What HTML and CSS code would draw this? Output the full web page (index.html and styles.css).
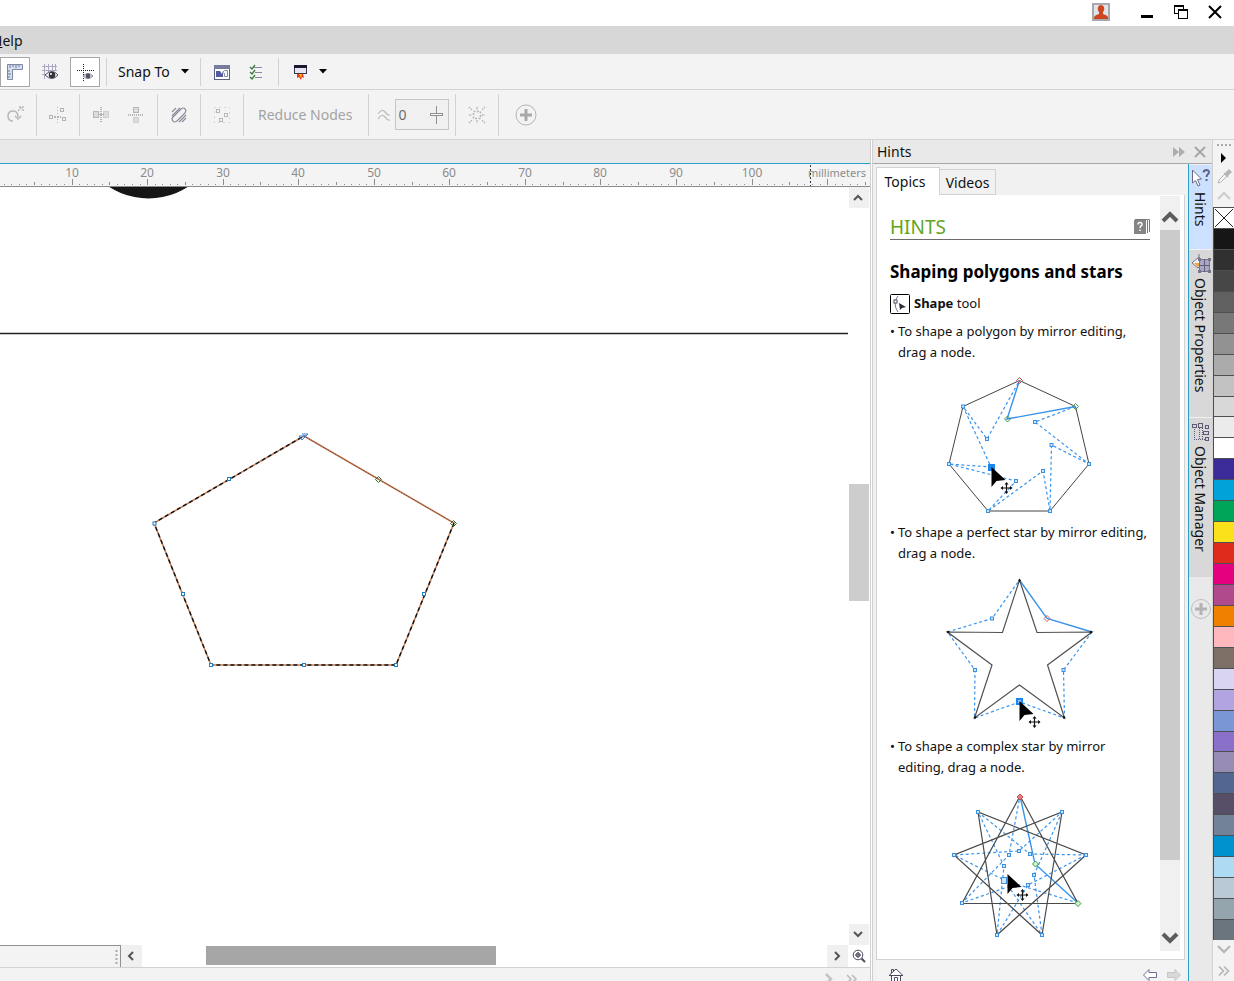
FILE: index.html
```
<!DOCTYPE html>
<html lang="en">
<head>
<meta charset="UTF-8" />
<meta name="viewport" content="width=device-width, initial-scale=1" />
<title>Drawing</title>
<link rel="stylesheet" href="styles.css">
</head>
<body>
<!-- shared shapes -->
<svg class="defs" aria-hidden="true">
  <defs>
    <path id="up" d="M1 9 L7 3 L13 9" fill="none" stroke-width="2.4" />
    <path id="down" d="M1 3 L7 9 L13 3" fill="none" stroke-width="2.4" />
    <g id="arrow-cursor">
      <path d="M0 0 V20 L5 14 L14 13 Z" fill="#000" />
      <path d="M10 21 H20 M15 16 V26" stroke="#111" stroke-width="1.2" />
      <path d="M9 21 l2.5 -2 v4 Z M21 21 l-2.5 -2 v4 Z M15 15 l-2 2.5 h4 Z M15 27 l-2 -2.5 h4 Z" fill="#111" />
    </g>
    <rect id="node" x="-1.5" y="-1.5" width="3" height="3" />
    <path id="diamond" d="M0 -3 L3 0 L0 3 L-3 0 Z" />
  </defs>
</svg>

<div class="app">
  <header class="titlebar">
    <button class="win-btn user" aria-label="Account">
      <svg width="18" height="18"><rect x="1" y="1" width="16" height="16" fill="#dfe5ea" stroke="#a9a9ad" stroke-width="2" /><path d="M2 16 V14 Q3 12 7 11 V9 Q5 7 6 4 Q7 2 9 2 Q11 2 12 4 Q13 7 11 9 V11 Q15 12 16 14 V16 Z" fill="#cf4520" /></svg>
    </button>
    <button class="win-btn" aria-label="Minimize">
      <svg width="14" height="14"><rect x="1" y="10" width="12" height="3" fill="#000" /></svg>
    </button>
    <button class="win-btn" aria-label="Restore">
      <svg width="14" height="14" fill="#fff" stroke="#000"><rect x="0.5" y="0.5" width="9" height="8" /><path d="M0 1 H10" stroke-width="2" /><rect x="4.5" y="4.5" width="9" height="9" /><path d="M4 5 H14" stroke-width="2" /></svg>
    </button>
    <button class="win-btn" aria-label="Close">
      <svg width="14" height="14"><path d="M1 1 L13 13 M13 1 L1 13" stroke="#000" stroke-width="2" /></svg>
    </button>
  </header>

  <nav class="menubar"><button><u>H</u>elp</button></nav>

  <div class="toolbar standard" role="toolbar" aria-label="Standard">
    <button class="tool pressed" aria-label="Show rulers">
      <svg width="18" height="18"><path d="M1.5 1.5 H16.5 V6.5 H6.5 V16.5 H1.5 Z" fill="#d3e0ef" stroke="#7e87a5" /><path d="M4 2 V5 M7 2 V4 M10 2 V5 M13 2 V4 M2 8 H4 M2 11 H5 M2 14 H4" stroke="#6d7590" /></svg>
    </button>
    <button class="tool" aria-label="Show grid">
      <svg width="18" height="18"><path d="M1 3.5 H16 M1 7.5 H16 M1 11.5 H8 M3.5 1 V16 M7.5 1 V10 M11.5 1 V8 M14.5 1 V8" stroke="#aaa8c4" /><path d="M4 12 Q11 5 17 12 Q11 19 4 12 Z" fill="#fff" stroke="#4d4b5b" /><circle cx="11" cy="12" r="3.3" fill="#34323d" /><circle cx="10" cy="11" r="1" fill="#fff" /></svg>
    </button>
    <button class="tool pressed" aria-label="Show guidelines">
      <svg width="18" height="18"><path d="M1 7.5 H18 M7.5 1 V18" stroke="#222" stroke-dasharray="1 1" /><path d="M7 13 Q12 8 17 13 Q12 18 7 13 Z" fill="#e4e4e8" stroke="#8d8a99" /><circle cx="12" cy="13" r="2.4" fill="#55525f" /></svg>
    </button>
    <span class="sep"></span>
    <button class="snap">Snap To <svg width="8" height="5"><path d="M0 0 H8 L4 4.5 Z" /></svg></button>
    <span class="sep"></span>
    <button class="tool" aria-label="Welcome screen">
      <svg width="16" height="16"><rect x="0.5" y="1.5" width="15" height="14" fill="#fff" stroke="#5c6180" /><rect x="0" y="1" width="16" height="4" fill="#777b9c" /><path d="M2 7 H6 L8 10 L9 7 V13 H2 Z" fill="#55599e" /><path d="M8.5 8.5 L10.5 6.5 H13.5 V12.5 H10.5 V9.5 Z" fill="#f4f4ff" stroke="#888cab" /></svg>
    </button>
    <button class="tool" aria-label="Options">
      <svg width="16" height="16"><path d="M5 3.5 H13 M6 8.5 H13 M6 13.5 H13" stroke="#8b87a8" /><path d="M1 3 L3 5 L6 1 M1 8 L3 10 L6 6 M1 13 L3 15 L6 11" stroke="#3b7a3b" stroke-width="1.3" fill="none" /></svg>
    </button>
    <span class="sep"></span>
    <button class="tool" aria-label="Application launcher">
      <svg width="16" height="18"><rect x="2.5" y="2.5" width="12" height="8" fill="#e6e4f2" stroke="#3a3853" /><rect x="2" y="2" width="13" height="3" fill="#1b1930" /><path d="M5 11 H11 L12 15 L10 14 L9 17 L7 14 L5 15 Z" fill="#e8381c" /><path d="M7 11 H10 L9 15 Z" fill="#ffbe1e" /></svg>
    </button>
    <button class="more" aria-label="Launcher list"><svg width="8" height="5"><path d="M0 0 H8 L4 4.5 Z" /></svg></button>
  </div>

  <div class="toolbar property" role="toolbar" aria-label="Property bar">
    <button class="tool" aria-label="Rotate nodes">
      <svg width="18" height="18" fill="none" stroke="#b8b8b8" stroke-width="1.5"><path d="M7 15 Q2 15 2 10 Q2 5 7 5 Q12 5 12 11 M9 10 L12 13 L15 10" /><path d="M12 5 L16 1 M13 1 H17 V5" stroke-dasharray="2 1" /></svg>
    </button>
    <span class="sep"></span>
    <button class="tool" aria-label="Align nodes">
      <svg width="18" height="18" fill="none" stroke="#b5b5b5"><path d="M8.5 1 V17" stroke-dasharray="1 2" /><rect x="0.5" y="9.5" width="3" height="3" /><rect x="11.5" y="2.5" width="3" height="3" /><rect x="13.5" y="11.5" width="3" height="3" /><path d="M5 11 H12" stroke-width="2" stroke-dasharray="2 1" /></svg>
    </button>
    <span class="sep"></span>
    <button class="tool" aria-label="Reflect horizontally">
      <svg width="18" height="18" fill="#dcdcdc" stroke="#b5b5b5"><rect x="1.5" y="5.5" width="5" height="6" /><rect x="11.5" y="5.5" width="5" height="6" stroke-dasharray="1 1" /><path d="M9 1 V17" stroke-width="2" stroke-dasharray="1 1" /><path d="M6 8.5 H12" /></svg>
    </button>
    <button class="tool" aria-label="Reflect vertically">
      <svg width="18" height="18" fill="#dcdcdc" stroke="#b5b5b5"><rect x="6.5" y="1.5" width="5" height="5" /><rect x="6.5" y="11.5" width="5" height="5" stroke-dasharray="1 1" /><path d="M1 9 H17" stroke-width="2" stroke-dasharray="1 1" /></svg>
    </button>
    <span class="sep"></span>
    <button class="tool" aria-label="Elastic mode">
      <svg width="18" height="18" fill="none" stroke="#8d8b9a" stroke-width="1.2"><path d="M2 6 L6 2 M2 10 L10 2 M9 16 L16 9 M12 16 L16 12" /><path d="M3 11 L11 3 Q14 1 15 3 Q17 5 14 8 L7 15 Q4 17 3 15 Q1 13 3 11 Z" /></svg>
    </button>
    <span class="sep"></span>
    <button class="tool" aria-label="Select all nodes">
      <svg width="18" height="18" fill="none" stroke="#b8b8b8"><rect x="1.5" y="1.5" width="15" height="15" stroke-dasharray="1 4" /><rect x="3.5" y="3.5" width="3" height="3" /><rect x="11.5" y="7.5" width="3" height="3" /><rect x="6.5" y="12.5" width="3" height="3" /></svg>
    </button>
    <span class="sep"></span>
    <button class="reduce" disabled>Reduce Nodes</button>
    <span class="sep"></span>
    <div class="smooth">
      <label for="smooth" aria-label="Curve smoothness">
        <svg width="18" height="16" fill="none" stroke="#bdbdbd" stroke-width="1.3"><path d="M3 7 Q7 1 10 5 T15 8 M3 12 Q7 6 10 10 T15 13" /></svg>
      </label>
      <div class="spin">
        <input id="smooth" type="text" value="0">
        <svg width="14" height="20" fill="#f6f6f6" stroke="#909090"><path d="M6.5 1 V19" /><rect x="0.5" y="8.5" width="12" height="2" /></svg>
      </div>
    </div>
    <span class="sep"></span>
    <button class="tool" aria-label="Bounding box">
      <svg width="18" height="18" fill="none" stroke="#b5b5b5"><rect x="5.5" y="5.5" width="7" height="7" stroke-width="1.5" stroke-dasharray="2 1.5" /><path d="M1 1 L4 4 M17 1 L14 4 M1 17 L4 14 M17 17 L14 14 M9 1 V4 M9 14 V17 M1 9 H4 M14 9 H17" stroke-width="1.5" stroke-dasharray="1.5 1" /></svg>
    </button>
    <span class="sep"></span>
    <button class="add" aria-label="Customize">
      <svg width="22" height="22"><circle cx="11" cy="11" r="10" fill="none" stroke="#b5b5b5" /><path d="M11 5 V17 M5 11 H17" stroke="#a9a9a9" stroke-width="3" /></svg>
    </button>
  </div>

  <main class="workspace">
    <section class="document">
      <div class="doc-tabs"></div>
      <svg class="ruler" id="ruler"></svg>
      <div class="view">
        <svg class="canvas" role="img" aria-label="Pentagon with edit nodes">
          <circle cx="148.5" cy="-61" r="72.5" fill="#161616" />
          <path d="M0 146.5 H848" stroke="#222" stroke-width="1.5" />
          <g fill="none">
            <path d="M304 249 L454 336 L396 478 H211 L154 336 Z" stroke="#c4805c" stroke-width="1.6" />
            <path d="M454 336 L396 478 H211 L154 336 L304 249" stroke="#111" stroke-width="1.4" stroke-dasharray="4 3" />
            <path d="M304 249 L454 336" stroke="#7a3a24" stroke-dasharray="1 1" />
          </g>
          <g fill="#fff" stroke="#1d7fc4">
            <use href="#node" x="154.5" y="336.5" /><use href="#node" x="229" y="292" />
            <use href="#node" x="183" y="407" /><use href="#node" x="211" y="478" />
            <use href="#node" x="304" y="478" /><use href="#node" x="396" y="478" />
            <use href="#node" x="424" y="407" />
            <path d="M299 249 H306 L302 253 Z M302 247 H308 L304 251" fill="none" stroke="#2f7fd8" />
          </g>
          <g fill="none" stroke="#2e6b30">
            <use href="#diamond" x="378.5" y="292.5" /><use href="#diamond" x="453.5" y="336.5" />
          </g>
        </svg>
        <div class="vscroll">
          <button aria-label="Scroll up"><svg width="14" height="12" stroke="#555"><path d="M2 8 L6 4 L10 8" fill="none" stroke-width="2" /></svg></button>
          <div class="track"><div class="thumb"></div></div>
          <button aria-label="Scroll down"><svg width="14" height="12" stroke="#555"><path d="M2 3 L6 7 L10 3" fill="none" stroke-width="2" /></svg></button>
        </div>
      </div>
      <div class="hscroll">
        <div class="pages"><svg width="3" height="16"><path d="M1.5 1 V16" stroke="#aaa" stroke-width="2" stroke-dasharray="2 2" /></svg></div>
        <button aria-label="Scroll left"><svg width="12" height="12"><path d="M7 2 L3 6 L7 10" fill="none" stroke="#555" stroke-width="2" /></svg></button>
        <div class="track"><div class="thumb"></div></div>
        <button aria-label="Scroll right"><svg width="12" height="12"><path d="M3 2 L7 6 L3 10" fill="none" stroke="#555" stroke-width="2" /></svg></button>
        <button class="navigator" aria-label="Navigator"><svg width="14" height="14" fill="none" stroke="#4b4b5e"><circle cx="6" cy="6" r="4.8" /><circle cx="6" cy="6" r="2" /><path d="M6 3 V9 M3 6 H9" /><path d="M9.5 9.5 L13 13" stroke-width="2" /></svg></button>
      </div>
      <div class="docbar">
        <svg width="10" height="12"><path d="M2 1 L7 6 L2 11" fill="none" stroke="#c4c4c4" stroke-width="2.5" /></svg>
        <svg width="12" height="12"><path d="M1 2 L5 6 L1 10 M6 2 L10 6 L6 10" fill="none" stroke="#bcbcbc" stroke-width="1.6" /></svg>
      </div>
    </section>

    <aside class="docker">
      <div class="docker-head">
        <h2>Hints</h2>
        <button aria-label="Collapse docker"><svg width="14" height="12"><path d="M1 1 L7 6 L1 11 Z M7 1 L13 6 L7 11 Z" fill="#adadad" /></svg></button>
        <button aria-label="Close docker"><svg width="12" height="12"><path d="M1 1 L11 11 M11 1 L1 11" stroke="#a6a6a6" stroke-width="2" /></svg></button>
      </div>
      <div class="docker-body">
        <div class="panel">
          <div class="panel-tabs" role="tablist">
            <button role="tab" aria-selected="true" class="active">Topics</button>
            <button role="tab" aria-selected="false">Videos</button>
          </div>
          <div class="panel-main">
            <article class="hints">
              <div class="hints-title">
                <h3>HINTS</h3>
                <svg width="16" height="16"><rect x="0" y="1" width="12" height="14" fill="#858585" /><path d="M4 5.5 Q4 3.5 6 3.5 Q8.5 3.5 8 6 Q6 7 6 9 M6 10.5 V12" fill="none" stroke="#fff" stroke-width="1.4" /><path d="M1 0.5 H13.5 V14 M14 0.5 H15.5 V13" fill="none" stroke="#777" /></svg>
              </div>
              <h4>Shaping polygons and stars</h4>
              <p class="tool-name">
                <svg width="20" height="20" fill="none"><rect x="0.5" y="0.5" width="19" height="19" rx="1" stroke="#000" /><path d="M8 2 Q5 6 5 9 Q5 14 8 18" stroke="#77758a" /><rect x="4" y="6" width="3" height="3" fill="#fff" stroke="#4b4b5e" /><path d="M9 9 L10 16 L12 14 L16 13 Z" fill="#2e2c3a" /></svg>
                <span><b>Shape</b> tool</span>
              </p>
              <ul>
                <li>To shape a polygon by mirror editing, drag a node.
                  <svg class="figure" width="152" height="150" viewBox="944 372 152 150" fill="none">
                    <path d="M1019.5 380.5 L1075.5 406.5 L1089 464 L1050 511 H988 L949 464 L963 406.5 Z" stroke="#444" />
                    <g stroke="#3a94ec">
                      <path d="M1019.5 380.5 L1007 419 L1075.5 406.5" stroke-width="1.4" />
                      <path d="M1075.5 406.5 L1035 422 L1089 464 L1051.5 445 L1050 511 L1043 471 L988 511 L1016 481 L949 464 L991 467 L963 406.5 L987 439 L1019.5 380.5" stroke-dasharray="3 2.5" stroke-width="1.2" />
                    </g>
                    <g fill="#cfe6ff" stroke="#3a8fe0">
                      <use href="#node" x="963" y="406.5" /><use href="#node" x="949" y="464" /><use href="#node" x="988" y="511" /><use href="#node" x="1050" y="511" /><use href="#node" x="1089" y="464" />
                      <use href="#node" x="987" y="439" /><use href="#node" x="1035" y="422" /><use href="#node" x="1051.5" y="445" /><use href="#node" x="1043" y="471" /><use href="#node" x="1016" y="481" />
                    </g>
                    <use href="#diamond" x="1019.5" y="380.5" stroke="#d04848" />
                    <g stroke="#3c9a4c"><use href="#diamond" x="1007.5" y="419" /><use href="#diamond" x="1075.5" y="406.5" /></g>
                    <rect x="988" y="464" width="7" height="7" fill="#1c86ee" />
                    <use href="#arrow-cursor" x="991.5" y="467" />
                  </svg>
                </li>
                <li>To shape a perfect star by mirror editing, drag a node.
                  <svg class="figure" width="152" height="163" viewBox="944 573 152 163" fill="none">
                    <g stroke="#3a94ec">
                      <path d="M1019.5 580 L1047 618.5 L1092 632" stroke-width="1.4" />
                      <path d="M1092 632 L1063.5 670 L1064.5 718 L1019.5 702 L974.5 718 L975 670 L947.5 632 L992 618.5 L1019.5 580" stroke-dasharray="3 2.5" stroke-width="1.2" />
                    </g>
                    <path d="M1019.5 580 L1037 632.5 L1092 632 L1047.5 665 L1064.5 718 L1019.5 685 L974.5 718 L992 665 L947.5 632 L1002.5 632.5 Z" stroke="#505050" stroke-width="1.2" />
                    <g fill="#111"><circle cx="1019.5" cy="580.5" r="1.2" /><circle cx="1091" cy="632" r="1.2" /><circle cx="948" cy="632" r="1.2" /><circle cx="975" cy="717.5" r="1.2" /><circle cx="1064" cy="717.5" r="1.2" /></g>
                    <g fill="#cfe6ff" stroke="#3a8fe0"><use href="#node" x="992" y="618.5" /><use href="#node" x="975" y="670" /><use href="#node" x="1063.5" y="670" /></g>
                    <use href="#diamond" x="1047" y="618.5" stroke="#d06060" />
                    <rect x="1017" y="699" width="5" height="5" fill="#8cc4ff" stroke="#1c86ee" stroke-width="2" />
                    <use href="#arrow-cursor" x="1019.5" y="701" />
                  </svg>
                </li>
                <li>To shape a complex star by mirror editing, drag a node.
                  <svg class="figure" width="152" height="160" viewBox="944 787 152 160" fill="none">
                    <g stroke="#3a94ec">
                      <path d="M1020 796 L1035 864 L1078 903" stroke-width="1.4" />
                      <path d="M1062 812 L1034 875 L1042 935 L1004 880 L954 855 L1019 851 L1062 812 M1086 855 L1028 885 L997 935 L1004 866 L978 812 L1030 854 L1086 855 M1078 903 L1016 884 L962 903 L1009 855 L1020 796" stroke-dasharray="3 2.5" stroke-width="1.2" />
                    </g>
                    <path d="M1020 796 L1078 903.5 H962 Z M1062 812 L1042 935 L954 855 Z M1086 855 L997 935 L978 812 Z" stroke="#4a4a4a" stroke-width="1.2" />
                    <g fill="#cfe6ff" stroke="#3a8fe0">
                      <use href="#node" x="1062" y="812" /><use href="#node" x="1086" y="855" /><use href="#node" x="1042" y="935" /><use href="#node" x="997" y="935" /><use href="#node" x="962" y="903" /><use href="#node" x="954" y="855" /><use href="#node" x="978" y="812" />
                      <use href="#node" x="1034" y="875" /><use href="#node" x="1028" y="885" /><use href="#node" x="1004" y="866" /><use href="#node" x="1009" y="855" /><use href="#node" x="1019" y="851" /><use href="#node" x="1030" y="854" />
                      <rect x="1001.5" y="877.5" width="5" height="6" />
                    </g>
                    <use href="#diamond" x="1020" y="797" fill="#e08080" stroke="#d04848" />
                    <g fill="#d8f2d0" stroke="#3c9a4c"><use href="#diamond" x="1035.5" y="864" /><use href="#diamond" x="1078" y="903.5" /></g>
                    <use href="#arrow-cursor" x="1007.5" y="874" />
                  </svg>
                </li>
              </ul>
            </article>
            <div class="panel-scroll">
              <button aria-label="Scroll hints up"><svg width="18" height="14"><path d="M2 11 L9 4 L16 11" fill="none" stroke="#5c5c5c" stroke-width="4" /></svg></button>
              <div class="track"><div class="thumb"></div></div>
              <button aria-label="Scroll hints down"><svg width="18" height="14"><path d="M2 3 L9 10 L16 3" fill="none" stroke="#5c5c5c" stroke-width="4" /></svg></button>
            </div>
          </div>
          <div class="panel-foot">
            <button aria-label="Home"><svg width="16" height="16" fill="#fff" stroke="#4c4a63"><path d="M3.5 8 V15.5 H12.5 V8" /><path d="M1 8.5 L8 2 L15 8.5 Z M3.5 6 V2.5 H5.5 V4" /><path d="M6.5 15 V10.5 H9.5 V15" /></svg></button>
            <span class="grow"></span>
            <button aria-label="Back"><svg width="16" height="14"><path d="M1.5 7 L7 1.5 V4.5 H14.5 V9.5 H7 V12.5 Z" fill="#fff" stroke="#6f7096" /></svg></button>
            <button aria-label="Forward"><svg width="16" height="14"><path d="M14.5 7 L9 1.5 V4.5 H1.5 V9.5 H9 V12.5 Z" fill="#d9d9d9" stroke="#c6c6c6" /></svg></button>
          </div>
        </div>
        <div class="side-tabs">
          <button class="active">
            <svg width="20" height="20"><path d="M1.5 2 V15 L4.5 12.5 L7 18 L9 17 L6.5 11.5 L10.5 11 Z" fill="#fff" stroke="#6a6a86" /><path d="M12.5 4.5 Q13 2 15.5 2 Q19 2.5 17.5 5.5 Q15.5 7 15.5 9 M15.5 11 V13" fill="none" stroke="#5e6284" stroke-width="2" /></svg>
            Hints
          </button>
          <button>
            <svg width="20" height="20"><path d="M1 9 L8 3 L13 9 L7 14 Z" fill="#f1f1f6" stroke="#77758c" /><path d="M3 9 H11 L7 13 Z" fill="#e9a33a" /><path d="M8 3 V0" stroke="#77758c" /><rect x="8.5" y="5.5" width="10" height="12" fill="#a9a6c4" stroke="#77758c" /><path d="M13.5 5 V18 M8 11.5 H19" stroke="#5f5d7a" /><path d="M7 4 h3 v3 h-3 Z M17 4 h3 v3 h-3 Z M7 16 h3 v3 h-3 Z M17 16 h3 v3 h-3 Z" fill="#77758c" /></svg>
            Object Properties
          </button>
          <button class="manager">
            <svg width="20" height="20" fill="none" stroke="#5d5b76"><rect x="1.5" y="2.5" width="4" height="3" /><rect x="7.5" y="1.500" width="4" height="4" /><rect x="14.5" y="3.5" width="3" height="3" /><rect x="12.5" y="9.5" width="5" height="3" /><rect x="14.5" y="15.5" width="3" height="3" /><path d="M3.5 7 V18 M8.5 6 V18 M11.5 6 V18 M3 17.5 H14" stroke-dasharray="1 1" /></svg>
            Object Manager
          </button>
          <button class="add-tab" aria-label="Add docker"><svg width="20" height="20"><circle cx="10" cy="10" r="9.5" fill="none" stroke="#bdbdbd" /><path d="M10 4 V16 M4 10 H16" stroke="#b3b3b3" stroke-width="3" /></svg></button>
        </div>
      </div>
    </aside>

    <div class="palette">
      <div class="palette-top">
        <svg width="16" height="4"><path d="M1 2 H16" stroke="#aaa" stroke-width="2" stroke-dasharray="2 2" /></svg>
        <button aria-label="Palette menu"><svg width="8" height="12"><path d="M1 1 L6 6 L1 11 Z" fill="#000" /></svg></button>
        <button aria-label="Eyedropper"><svg width="16" height="16"><path d="M2 14 L3 11 L9 5 L11 7 L5 13 Z" fill="#f5f5f5" stroke="#b5b5b5" /><path d="M8 4 L12 8 M9 5 L13 1 L15 3 L11 7" fill="#b5b5b5" stroke="#b5b5b5" stroke-width="1.5" /></svg></button>
        <button aria-label="Palette up"><svg width="14" height="12" stroke="#cfcfcf"><use href="#up" /></svg></button>
      </div>
      <div class="swatches" id="swatches"></div>
      <div class="palette-end">
        <button aria-label="Palette down"><svg width="14" height="12" stroke="#b9b9b9"><use href="#down" /></svg></button>
        <button aria-label="Expand palette"><svg width="14" height="12"><path d="M2 1.5 L6.5 6 L2 10.5 M7 1.5 L11.5 6 L7 10.5" fill="none" stroke="#b5b5b5" stroke-width="1.6" /></svg></button>
      </div>
    </div>
  </main>
</div>

<script src="app.js"></script>
</body>
</html>
```
FILE: styles.css
```
:root {
  --bar: #f3f3f3;
  --strip: #e9e9e9;
  --line: #d2d2d2;
  --accent: #2b9fc9;
  --font: "Noto Sans", "Open Sans", sans-serif;
}

* {
  box-sizing: border-box;
}

body {
  margin: 0;
  font-family: var(--font);
  font-size: 14px;
  color: #111;
  background: #fff;
}

button {
  display: flex;
  align-items: center;
  justify-content: center;
  margin: 0;
  padding: 0;
  border: 0;
  background: none;
  color: inherit;
  font: inherit;
  white-space: nowrap;
}

svg {
  display: block;
  flex: none;
}

h2, h3, h4, p, ul {
  margin: 0;
  padding: 0;
  font-weight: normal;
}

.defs {
  position: absolute;
  width: 0;
  height: 0;
}

.app {
  display: flex;
  flex-direction: column;
  height: 100vh;
  overflow: hidden;
}

/* window bars */
.titlebar {
  display: flex;
  flex: none;
  justify-content: flex-end;
  align-items: center;
  gap: 20px;
  height: 26px;
  padding: 0 12px 2px 0;
}

.user {
  margin-right: 10px;
}

.menubar {
  display: flex;
  flex: none;
  align-items: center;
  height: 28px;
  margin-left: -8px;
  background: #d7d7d7;
}

.toolbar {
  display: flex;
  flex: none;
  align-items: center;
  gap: 5px;
  background: var(--bar);
  border-bottom: 1px solid var(--line);
}

.standard {
  height: 36px;
}

.property {
  height: 50px;
}

.tool {
  width: 30px;
  height: 30px;
}

.tool.pressed {
  background: #fff;
  border: 1px solid #a8a8a8;
}

.sep {
  width: 1px;
  height: 28px;
  margin: 0 1px;
  background: var(--line);
}

.property .sep {
  height: 42px;
}

.snap {
  gap: 11px;
  padding: 0 5px;
}

.more {
  padding: 0 4px;
  margin-left: -5px;
}

.reduce {
  padding: 0 10px 0 8px;
  color: #a3a3a3;
}

.smooth {
  display: flex;
  align-items: center;
  gap: 2px;
}

.spin {
  display: flex;
  align-items: center;
  width: 54px;
  height: 31px;
  padding: 0 4px 0 2px;
  border: 1px solid #c6c6c6;
  background: #f0f0f0;
}

.spin input {
  flex: 1;
  min-width: 0;
  padding: 0;
  border: 0;
  background: none;
  color: #6e6e6e;
  font: 14px var(--font);
}

.add {
  width: 42px;
}

/* workspace */
.workspace {
  display: flex;
  flex: 1;
  min-height: 0;
}

.document {
  display: flex;
  flex: 1;
  flex-direction: column;
  min-width: 0;
}

.doc-tabs {
  flex: none;
  height: 24px;
  background: var(--strip);
  border-bottom: 1px solid var(--accent);
}

.ruler {
  width: 100%;
  height: 23px;
  background: #f4f4f4;
  border-bottom: 1px solid #8a8a8a;
  font-size: 12px;
  fill: #8c8c8c;
}

.ruler .unit {
  font-size: 11px;
}

.view {
  display: flex;
  flex: 1;
  min-height: 0;
}

.canvas {
  flex: 1;
  min-width: 0;
  height: 100%;
}

.vscroll {
  display: flex;
  flex-direction: column;
  width: 22px;
  padding: 0 1px;
}

.vscroll button {
  height: 21px;
  background: #f0f0f0;
}

.track {
  flex: 1;
}

.vscroll .thumb {
  height: 117px;
  margin-top: 276px;
  background: #cdcdcd;
}

.hscroll {
  display: flex;
  flex: none;
  height: 22px;
}

.hscroll button {
  width: 21px;
  background: #f0f0f0;
}

.hscroll .navigator {
  width: 22px;
  background: #fff;
}

.pages {
  display: flex;
  align-items: center;
  justify-content: flex-end;
  width: 121px;
  padding-right: 2px;
  background: var(--bar);
  border: solid #8e9190;
  border-width: 1px 1px 0 0;
}

.hscroll .thumb {
  width: 290px;
  height: 19px;
  margin: 1px 0 0 64px;
  background: #a6a6a6;
}

.docbar {
  display: flex;
  flex: none;
  align-items: flex-end;
  justify-content: flex-end;
  gap: 12px;
  height: 14px;
  padding-right: 12px;
  overflow: hidden;
  background: var(--bar);
  border-top: 1px solid var(--line);
}

.docbar svg {
  margin-bottom: -4px;
}

/* docker */
.docker {
  display: flex;
  flex-direction: column;
  width: 342px;
  border-left: 3px double #d0d0d0;
}

.docker-head {
  display: flex;
  flex: none;
  align-items: center;
  gap: 8px;
  height: 24px;
  padding: 0 6px 0 4px;
  background: var(--strip);
  border-bottom: 1px solid #a8a8a8;
}

.docker-head h2 {
  flex: 1;
  font-size: 14px;
}

.docker-body {
  display: flex;
  flex: 1;
  min-height: 0;
}

.panel {
  display: flex;
  flex: 1;
  flex-direction: column;
  padding: 3px 3px 0;
  background: #f1f1f1;
}

.panel-tabs {
  display: flex;
  flex: none;
  align-items: flex-end;
  height: 28px;
}

.panel-tabs button {
  width: 56px;
  height: 26px;
  border: 1px solid var(--line);
  border-left: 0;
}

.panel-tabs .active {
  width: 64px;
  height: 28px;
  padding-right: 6px;
  border: 1px solid var(--line);
  border-bottom: 0;
  background: #fff;
}

.panel-main {
  display: flex;
  flex: 1;
  min-height: 0;
  padding: 1px 4px 8px 0;
  border: solid var(--line);
  border-width: 0 1px 0 1px;
  background: #fff;
}

.hints {
  flex: 1;
  min-width: 0;
  overflow: hidden;
  padding: 19px 10px 0 13px;
  font-size: 13px;
  line-height: 21px;
}

.hints-title {
  display: flex;
  align-items: center;
  justify-content: space-between;
  height: 25px;
  border-bottom: 1px solid #6b6b6b;
}

.hints-title h3 {
  font-size: 19px;
  color: #5ea51a;
}

.hints h4 {
  margin-top: 20px;
  font-size: 17px;
  font-weight: bold;
  line-height: 24px;
  color: #000;
}

.tool-name {
  display: flex;
  align-items: center;
  gap: 4px;
  margin: 9px 0 7px;
}

.hints ul {
  list-style: none;
}

.hints li {
  padding-left: 8px;
}

.hints li::before {
  content: "•";
  float: left;
  width: 8px;
  margin-left: -8px;
}

.figure {
  margin: 9px 0 0 46px;
}

.panel-scroll {
  display: flex;
  flex-direction: column;
  width: 20px;
  background: #f0f0f0;
}

.panel-scroll button {
  height: 34px;
  padding-top: 8px;
}

.panel-scroll .thumb {
  height: 630px;
  background: #cbcbcb;
}

.panel-foot {
  display: flex;
  flex: none;
  gap: 8px;
  height: 22px;
  padding: 8px 3px 0 12px;
  overflow: hidden;
  border-top: 1px solid var(--line);
  background: var(--bar);
}

.grow {
  flex: 1;
}

.side-tabs {
  display: flex;
  flex: none;
  flex-direction: column;
  width: 24px;
  background: var(--strip);
  border-left: 1px solid var(--accent);
}

.side-tabs button {
  justify-content: flex-start;
  gap: 4px;
  height: 168px;
  padding-top: 4px;
  border-top: 1px solid #efefef;
  background: #d8d8d8;
  writing-mode: vertical-rl;
}

.side-tabs .active {
  height: 85px;
  padding-top: 3px;
  background: #cce0ff;
}

.side-tabs .manager {
  height: 160px;
}

.side-tabs .add-tab {
  height: 60px;
  justify-content: center;
  border: 0;
  background: none;
}

/* color palette */
.palette {
  display: flex;
  flex: none;
  flex-direction: column;
  width: 22px;
  background: var(--bar);
  border-left: 1px solid var(--line);
}

.palette-top {
  display: flex;
  flex: none;
  flex-direction: column;
  align-items: center;
  gap: 5px;
  height: 67px;
  padding-top: 3px;
}

.swatches {
  display: flex;
  flex: 1;
  flex-direction: column;
}

.swatches button {
  flex: 1;
  border: solid #4c4f54;
  border-width: 1px 0 0 1px;
}

.palette-end {
  display: flex;
  flex: none;
  flex-direction: column;
  align-items: center;
  gap: 10px;
  height: 41px;
  padding-top: 3px;
}
```
FILE: app.js
```
(function() {
  const svgNs = 'http://www.w3.org/2000/svg';
  const ruler = document.getElementById('ruler');
  const unit = 7.556;
  const origin = -4;

  function add(name, attrs, text) {
    const el = document.createElementNS(svgNs, name);
    Object.keys(attrs).forEach(key => el.setAttribute(key, attrs[key]));
    if (text) el.textContent = text;
    ruler.appendChild(el);
  }

  // ticks: one per millimeter, taller on 5 and 10
  for (let mm = 1; mm < 116; mm++) {
    const x = Math.round(origin + mm * unit);
    const h = mm % 10 === 0 ? 6 : mm % 5 === 0 ? 3 : 1;
    add('rect', { x: x, y: 21 - h, width: 1, height: h });
    if (mm % 10 === 0 && mm <= 100) {
      add('text', { x: x, y: 13, 'text-anchor': 'middle' }, String(mm));
    }
  }
  add('text', { class: 'unit', x: 866, y: 13, 'text-anchor': 'end' }, 'millimeters');
  add('path', { d: 'M810.5 1 V22', stroke: '#333', 'stroke-dasharray': '2 2' });

  const colors = [
    '#ffffff', '#161616', '#303030', '#474747', '#606060', '#787878', '#929292',
    '#ababab', '#c2c2c2', '#d8d8d8', '#ebebeb', '#ffffff', '#3b2b98', '#00a3d9',
    '#00a55a', '#fbe11a', '#df2b1c', '#e5007f', '#b04a8c', '#f08000', '#ffb8bd',
    '#7d6e66', '#dad4f3', '#b1a4e1', '#7b96d4', '#8a70c9', '#968cb5', '#516690',
    '#574f68', '#728399', '#0092ce', '#aedbf3', '#b9cad6', '#94a5ae', '#6a757d'
  ];
  const swatches = document.getElementById('swatches');

  colors.forEach((color, i) => {
    const button = document.createElement('button');
    button.style.background = color;
    button.setAttribute('aria-label', i === 0 ? 'No color' : color);
    if (i === 0) {
      button.innerHTML = '<svg width="20" height="20"><path d="M1 1 L19 19 M19 1 L1 19" stroke="#222" /></svg>';
    }
    swatches.appendChild(button);
  });
})();
```
